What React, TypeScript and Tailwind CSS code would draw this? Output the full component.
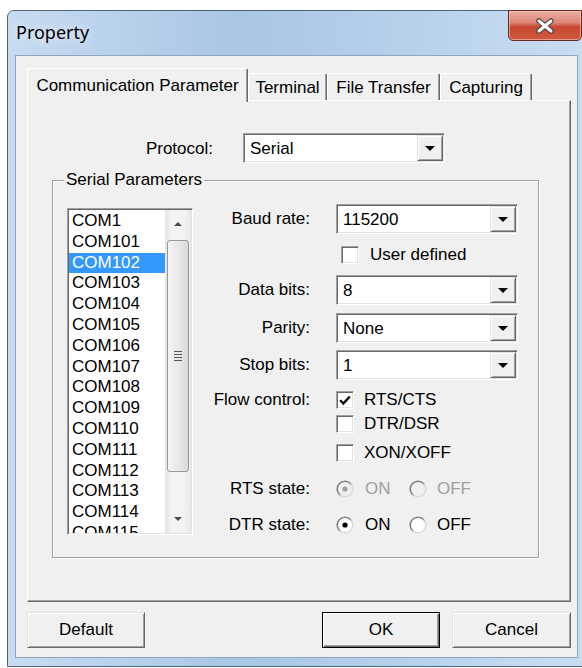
import React from "react";

// classic 3D edges
const raised =
  "border border-t-[#e3e3e3] border-l-[#e3e3e3] border-b-[#696969] border-r-[#696969] shadow-[inset_1px_1px_0_#fff,inset_-1px_-1px_0_#a0a0a0]";
const sunken =
  "border border-t-[#a0a0a0] border-l-[#a0a0a0] border-b-white border-r-white shadow-[inset_1px_1px_0_#696969,inset_-1px_-1px_0_#e3e3e3]";

const ports = Array.from({ length: 16 }, (_, i) => (i === 0 ? "COM1" : `COM${100 + i}`));

function DropArrow() {
  return (
    <svg width="10" height="5" viewBox="0 0 10 5">
      <path d="M0 0h10L5 5z" fill="#000" />
    </svg>
  );
}

function ComboBox({ value, className }: { value: string; className: string }) {
  return (
    <div className={`flex h-[30px] bg-white p-[1px] ${sunken} ${className}`}>
      <div className="flex flex-1 items-center pl-[5px] pt-[1px]">{value}</div>
      <div className={`flex w-[26px] items-center justify-center bg-[#f0f0f0] ${raised}`}>
        <DropArrow />
      </div>
    </div>
  );
}

function CheckBox({ checked = false }: { checked?: boolean }) {
  return (
    <span className={`flex h-[18px] w-[18px] shrink-0 items-center justify-center bg-white ${sunken}`}>
      {checked && (
        <svg width="12" height="11" viewBox="0 0 12 11">
          <path d="M1.2 5.2l3.2 3.3L10.8 1.5" stroke="#000" strokeWidth="2.3" fill="none" />
        </svg>
      )}
    </span>
  );
}

function Radio({ id, on = false, disabled = false }: { id: string; on?: boolean; disabled?: boolean }) {
  return (
    <svg width="18" height="18" viewBox="0 0 18 18" className="shrink-0">
      <defs>
        <linearGradient id={id} x1="0" y1="0" x2="1" y2="1">
          <stop offset="0.45" stopColor="#808080" />
          <stop offset="0.6" stopColor="#dcdcdc" />
        </linearGradient>
      </defs>
      <circle cx="9" cy="9" r="7.8" fill={disabled ? "#f0f0f0" : "#fff"} stroke={`url(#${id})`} strokeWidth="1.6" />
      {on && <circle cx="9" cy="9" r="2.6" fill={disabled ? "#a0a0a0" : "#000"} />}
    </svg>
  );
}

function Row({ label, className, children }: { label: string; className: string; children: React.ReactNode }) {
  return (
    <div className={`flex items-center ${className}`}>
      <div className="w-[118px] pr-[1px] text-right">{label}</div>
      <div className="ml-[25px] flex items-center">{children}</div>
    </div>
  );
}

function ScrollBar() {
  return (
    <div className="flex w-[26px] flex-col bg-[linear-gradient(90deg,#e3e3e3,#f3f3f3_25%,#f3f3f3_75%,#e8e8e8)]">
      <div className="flex h-[28px] items-center justify-center">
        <svg width="8" height="4" viewBox="0 0 8 4">
          <path d="M0 4L4 0l4 4z" fill="#4a4a4a" />
        </svg>
      </div>
      <div className="mx-[2px] mt-[2px] flex h-[232px] flex-col items-center justify-center gap-[2px] rounded-[3px] border border-[#979797] bg-[linear-gradient(90deg,#f4f4f4,#e9e9e9_50%,#d8d8d8)]">
        <span className="h-[1px] w-[8px] bg-[#555]" />
        <span className="h-[1px] w-[8px] bg-[#555]" />
        <span className="h-[1px] w-[8px] bg-[#555]" />
        <span className="h-[1px] w-[8px] bg-[#555]" />
      </div>
      <div className="flex-1" />
      <div className="flex h-[28px] items-center justify-center">
        <svg width="8" height="4" viewBox="0 0 8 4">
          <path d="M0 0h8L4 4z" fill="#4a4a4a" />
        </svg>
      </div>
    </div>
  );
}

function PortList() {
  return (
    <div className={`mt-[18px] flex h-[327px] w-[126px] shrink-0 bg-white p-[1px] ${sunken}`}>
      <div className="w-[96px] overflow-hidden pt-[1px]">
        {ports.map((p) => (
          <div
            key={p}
            className={`h-[20.8px] pl-[3px] leading-[20.8px] ${p === "COM102" ? "bg-[#3399ff] text-white" : ""}`}
          >
            {p}
          </div>
        ))}
      </div>
      <ScrollBar />
    </div>
  );
}

function Tab({ label, width }: { label: string; width: string }) {
  return (
    <div
      className={`flex h-[27px] items-center justify-center rounded-t-[2px] border border-b-0 border-t-white border-l-white border-r-[#696969] pt-[1px] shadow-[inset_-1px_0_0_#a0a0a0] ${width}`}
    >
      {label}
    </div>
  );
}

function CloseButton() {
  return (
    <div className="-mt-[1px] flex h-[31px] w-[74px] items-center justify-center rounded-b-[5px] border border-[#6b2a20] bg-[linear-gradient(180deg,#eab0a3_0%,#de8575_40%,#c8462f_55%,#cf5a40_100%)] shadow-[inset_0_0_0_1px_rgba(255,210,200,0.55)]">
      <svg width="22" height="16" viewBox="0 0 22 16">
        <path d="M5 3l12 10M17 3L5 13" stroke="#4a4a4a" strokeWidth="5.5" strokeLinecap="round" />
        <path d="M5 3l12 10M17 3L5 13" stroke="#fff" strokeWidth="3" strokeLinecap="round" />
      </svg>
    </div>
  );
}

export default function App() {
  return (
    <div className="h-[668px] w-[582px] overflow-hidden bg-white font-['Liberation_Sans',Arial,sans-serif] text-[17px] leading-[20px] text-black">
      <div className="ml-[7px] mt-[10px] flex h-[657px] w-[576px] flex-col rounded-t-[7px] border border-[#4f647e] bg-[linear-gradient(90deg,#c8dcf0_0%,#bcd3ec_15%,#a9c6e5_40%,#b4cfea_65%,#c9ddf1_100%)]">
        {/* title bar */}
        <div className="flex h-[44px] items-start justify-between">
          <div className="pl-[8px] pt-[9px] font-['Noto_Sans',sans-serif] text-[18px] leading-[24px] [text-shadow:0_0_8px_rgba(255,255,255,0.9)]">
            Property
          </div>
          <CloseButton />
        </div>

        {/* client area */}
        <div className="ml-[7px] flex h-[603px] w-[563px] flex-col border border-[#8ea5c2] bg-[#f0f0f0]">
          <div className="ml-[11px] mt-[12px] flex h-[32px] items-end">
            <div className="relative z-10 -mb-[2px] flex h-[34px] w-[221px] items-center justify-center rounded-t-[2px] border border-b-0 border-t-white border-l-white border-r-[#696969] bg-[#f0f0f0] shadow-[inset_-1px_0_0_#a0a0a0]">
              Communication Parameter
            </div>
            <Tab label="Terminal" width="w-[79px]" />
            <Tab label="File Transfer" width="w-[113px]" />
            <Tab label="Capturing" width="w-[92px]" />
          </div>

          <div className="ml-[11px] flex h-[502px] w-[544px] flex-col border border-t-white border-l-white border-b-[#696969] border-r-[#696969] shadow-[inset_-1px_-1px_0_#a0a0a0]">
            <div className="mt-[32px] flex h-[30px] items-center">
              <div className="w-[185px] pt-[1px] text-right">Protocol:</div>
              <ComboBox value="Serial" className="ml-[30px] w-[202px]" />
            </div>

            <fieldset className="ml-[24px] mt-[7px] h-[388px] w-[487px] border border-[#a0a0a0] shadow-[1px_1px_0_#fff,inset_1px_1px_0_#fff]">
              <legend className="relative ml-[11px] bg-[#f0f0f0] px-[2px] leading-[20px]">Serial Parameters</legend>
              <div className="flex items-start pl-[14px]">
                <PortList />

                <div className="flex flex-col">
                  <Row label="Baud rate:" className="mt-[14px] h-[30px]">
                    <ComboBox value="115200" className="w-[182px]" />
                  </Row>
                  <Row label="" className="mt-[12px] h-[18px]">
                    <div className="ml-[5px] flex items-center gap-[11px]">
                      <CheckBox />
                      <span>User defined</span>
                    </div>
                  </Row>
                  <Row label="Data bits:" className="mt-[11px] h-[30px]">
                    <ComboBox value="8" className="w-[182px]" />
                  </Row>
                  <Row label="Parity:" className="mt-[8px] h-[30px]">
                    <ComboBox value="None" className="w-[182px]" />
                  </Row>
                  <Row label="Stop bits:" className="mt-[7px] h-[30px]">
                    <ComboBox value="1" className="w-[182px]" />
                  </Row>
                  <Row label="Flow control:" className="mt-[11px] h-[18px]">
                    <div className="flex items-center gap-[10px]">
                      <CheckBox checked />
                      <span>RTS/CTS</span>
                    </div>
                  </Row>
                  <Row label="" className="mt-[6px] h-[18px]">
                    <div className="flex items-center gap-[10px]">
                      <CheckBox />
                      <span>DTR/DSR</span>
                    </div>
                  </Row>
                  <Row label="" className="mt-[11px] h-[18px]">
                    <div className="flex items-center gap-[10px]">
                      <CheckBox />
                      <span>XON/XOFF</span>
                    </div>
                  </Row>
                  <Row label="RTS state:" className="mt-[18px] h-[18px]">
                    <div className="flex items-center text-[#a0a0a0]">
                      <Radio id="rts-on" on disabled />
                      <span className="ml-[11px] w-[44px]">ON</span>
                      <Radio id="rts-off" disabled />
                      <span className="ml-[10px]">OFF</span>
                    </div>
                  </Row>
                  <Row label="DTR state:" className="mt-[18px] h-[18px]">
                    <div className="flex items-center">
                      <Radio id="dtr-on" on />
                      <span className="ml-[11px] w-[44px]">ON</span>
                      <Radio id="dtr-off" />
                      <span className="ml-[10px]">OFF</span>
                    </div>
                  </Row>
                </div>
              </div>
            </fieldset>
          </div>

          <div className="ml-[11px] mt-[10px] flex h-[36px] w-[544px]">
            <button className={`w-[118px] bg-[#f0f0f0] ${raised}`}>Default</button>
            <button className="ml-auto w-[118px] border border-black bg-[#f0f0f0] shadow-[inset_1px_1px_0_#fff,inset_-1px_-1px_0_#696969,inset_-2px_-2px_0_#a0a0a0]">
              OK
            </button>
            <button className={`ml-[12px] w-[119px] bg-[#f0f0f0] ${raised}`}>Cancel</button>
          </div>
        </div>
      </div>
    </div>
  );
}
